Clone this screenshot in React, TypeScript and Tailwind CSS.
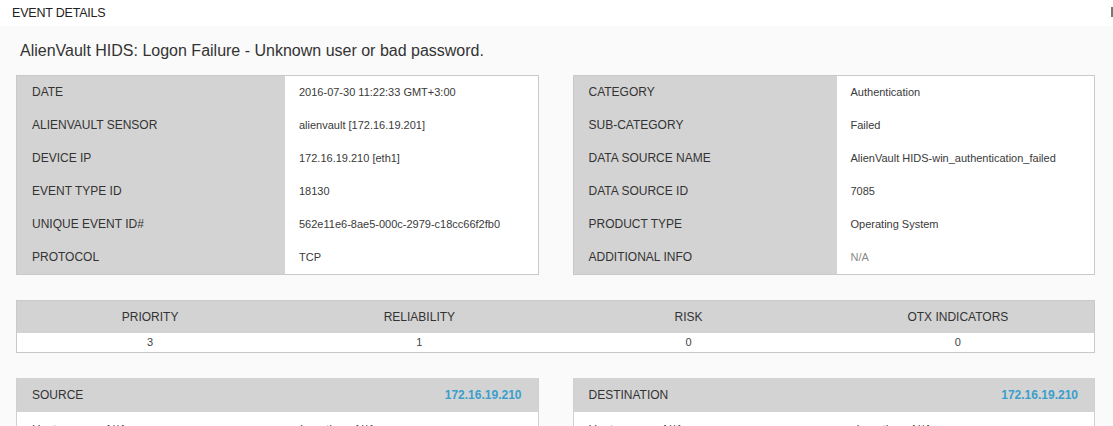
import React from "react";

const left = [
  ["DATE", "2016-07-30 11:22:33 GMT+3:00"],
  ["ALIENVAULT SENSOR", "alienvault [172.16.19.201]"],
  ["DEVICE IP", "172.16.19.210 [eth1]"],
  ["EVENT TYPE ID", "18130"],
  ["UNIQUE EVENT ID#", "562e11e6-8ae5-000c-2979-c18cc66f2fb0"],
  ["PROTOCOL", "TCP"],
];

const right = [
  ["CATEGORY", "Authentication"],
  ["SUB-CATEGORY", "Failed"],
  ["DATA SOURCE NAME", "AlienVault HIDS-win_authentication_failed"],
  ["DATA SOURCE ID", "7085"],
  ["PRODUCT TYPE", "Operating System"],
  ["ADDITIONAL INFO", "N/A"],
];

function InfoTable({ rows, labelW }: { rows: string[][]; labelW: string }) {
  return (
    <div className="flex-1 border border-[#c9c9c9] bg-white flex">
      <div className={`${labelW} bg-[#d3d3d3] flex flex-col`}>
        {rows.map(([l]) => (
          <div key={l} className="h-[33px] flex items-center pb-[1px] pl-[15px] text-[12px] text-[#333]">
            {l}
          </div>
        ))}
      </div>
      <div className="flex-1 flex flex-col">
        {rows.map(([l, v]) => (
          <div
            key={l}
            className={`h-[33px] flex items-center pb-[1px] pl-[14px] text-[11px] ${v === "N/A" ? "text-[#8a8a8a]" : "text-[#3a3a3a]"}`}
          >
            {v}
          </div>
        ))}
      </div>
    </div>
  );
}

function HostBox({ title }: { title: string }) {
  return (
    <div className="flex-1 border-l border-r border-[#d0d0d0] bg-white">
      <div className="h-[34px] bg-[#d3d3d3] flex items-center justify-between pl-[15px] pr-[16px]">
        <span className="text-[12px] text-[#333]">{title}</span>
        <span className="text-[12px] font-bold text-[#3a9fcc]">172.16.19.210</span>
      </div>
      <div className="flex pt-[9px] pl-[15px] text-[12px] text-[#444]">
        <div className="w-[268px] flex gap-[20px]">
          <span>Hostname</span>
          <span>N/A</span>
        </div>
        <div className="flex gap-[10px]">
          <span>Location</span>
          <span>N/A</span>
        </div>
      </div>
    </div>
  );
}

export default function App() {
  return (
    <div
      className="w-[1113px] h-[426px] overflow-hidden bg-[#fafafa]"
      style={{ fontFamily: '"Liberation Sans", Arial, sans-serif' }}
    >
      <div className="h-[26px] bg-white flex items-center justify-between pl-[12px]">
        <span className="text-[12.5px] text-[#222] tracking-[-0.2px]">EVENT DETAILS</span>
        <span className="w-[2px] h-[10px] bg-[#777] -mt-[2px]" />
      </div>
      <div className="pl-[16px] pr-[18px]">
        <div className="h-[49px] flex items-center pl-[4px] text-[16px] text-[#333]">
          AlienVault HIDS: Logon Failure - Unknown user or bad password.
        </div>
        <div className="flex gap-[34px]">
          <InfoTable rows={left} labelW="w-[268px]" />
          <InfoTable rows={right} labelW="w-[263px]" />
        </div>
        <div className="mt-[25px] border border-[#c9c9c9] bg-white">
          <div className="grid grid-cols-4 h-[32px] bg-[#d3d3d3] text-[12px] text-[#333]">
            {["PRIORITY", "RELIABILITY", "RISK", "OTX INDICATORS"].map((h) => (
              <div key={h} className="flex items-center justify-center pr-[3px]">
                {h}
              </div>
            ))}
          </div>
          <div className="grid grid-cols-4 h-[19px] text-[11px] text-[#444]">
            {["3", "1", "0", "0"].map((v, i) => (
              <div key={i} className="flex items-center justify-center pr-[3px]">
                {v}
              </div>
            ))}
          </div>
        </div>
        <div className="mt-[25px] flex gap-[34px]">
          <HostBox title="SOURCE" />
          <HostBox title="DESTINATION" />
        </div>
      </div>
    </div>
  );
}
